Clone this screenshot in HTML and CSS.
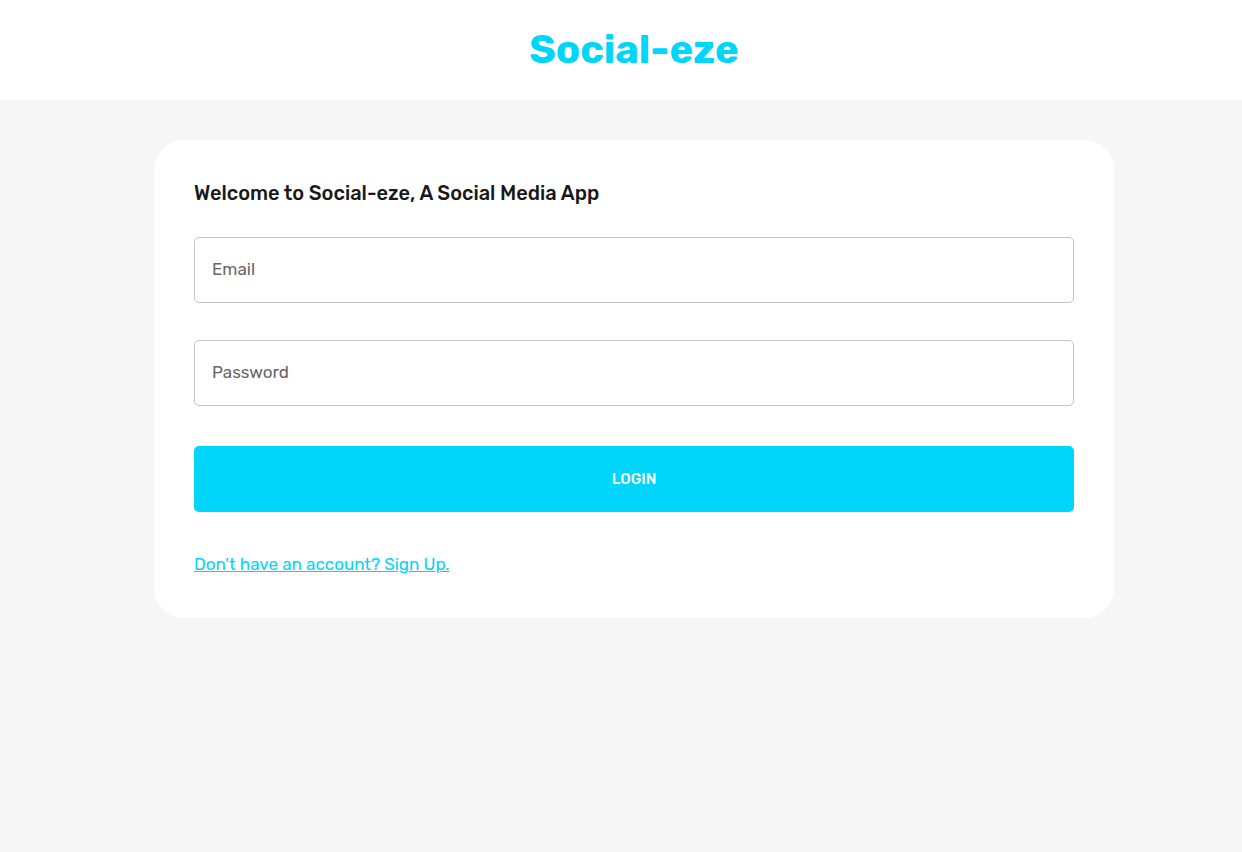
FILE: index.html
```html
<!DOCTYPE html>
<html lang="en">
<head>
<meta charset="utf-8">
<meta name="viewport" content="width=device-width, initial-scale=1">
<title>Social-eze</title>
<link rel="stylesheet" href="styles.css">
</head>
<body>
<header class="navbar"><h1 class="brand">Social-eze</h1></header>
<main class="page">
<section class="card">
<h2 class="welcome">Welcome to Social-eze, A Social Media App</h2>
<form class="form">
<div class="fields">
<input class="field" type="email" placeholder="Email" aria-label="Email">
<input class="field" type="password" placeholder="Password" aria-label="Password">
</div>
<button class="submit" type="submit">LOGIN</button>
<a class="switch" href="#signup">Don't have an account? Sign Up.</a>
</form>
</section>
</main>
</body>
</html>
```
FILE: styles.css
```css
* {
  box-sizing: border-box;
}

body {
  margin: 0;
  min-height: 100vh;
  background: #f6f6f6;
  color: #191919;
  font-family: Rubik, Roboto, "Open Sans", sans-serif;
}

.navbar {
  padding: 24px 0 24px 26px;
  background: #fff;
  text-align: center;
}

.brand {
  margin: 0;
  color: #00d5fa;
  font-size: 40px;
  line-height: 52px;
  font-weight: 700;
}

.page {
  padding: 40px 0 40px 26px;
}

.card {
  max-width: 960px;
  margin: 0 auto;
  padding: 40px 40px 42px;
  border-radius: 30px;
  background: #fff;
}

.welcome {
  margin: 0 0 31px;
  font-size: 20px;
  line-height: 26px;
  font-weight: 500;
}

.form {
  display: flex;
  flex-direction: column;
  gap: 40px;
}

.fields {
  display: flex;
  flex-direction: column;
  gap: 37px;
}

.field {
  height: 66px;
  padding: 0 17px 2px;
  border: 1px solid #c4c4c4;
  border-radius: 5px;
  background: #fff;
  color: #191919;
  font: inherit;
  font-size: 17px;
}

.field::placeholder {
  color: #666;
  opacity: 1;
}

.submit {
  height: 66px;
  border: 0;
  border-radius: 5px;
  background: #00d5fa;
  color: #fff;
  font: inherit;
  font-size: 15px;
  font-weight: 500;
}

.switch {
  align-self: flex-start;
  color: #00d5fa;
  font-size: 17px;
  line-height: 24px;
}
```
